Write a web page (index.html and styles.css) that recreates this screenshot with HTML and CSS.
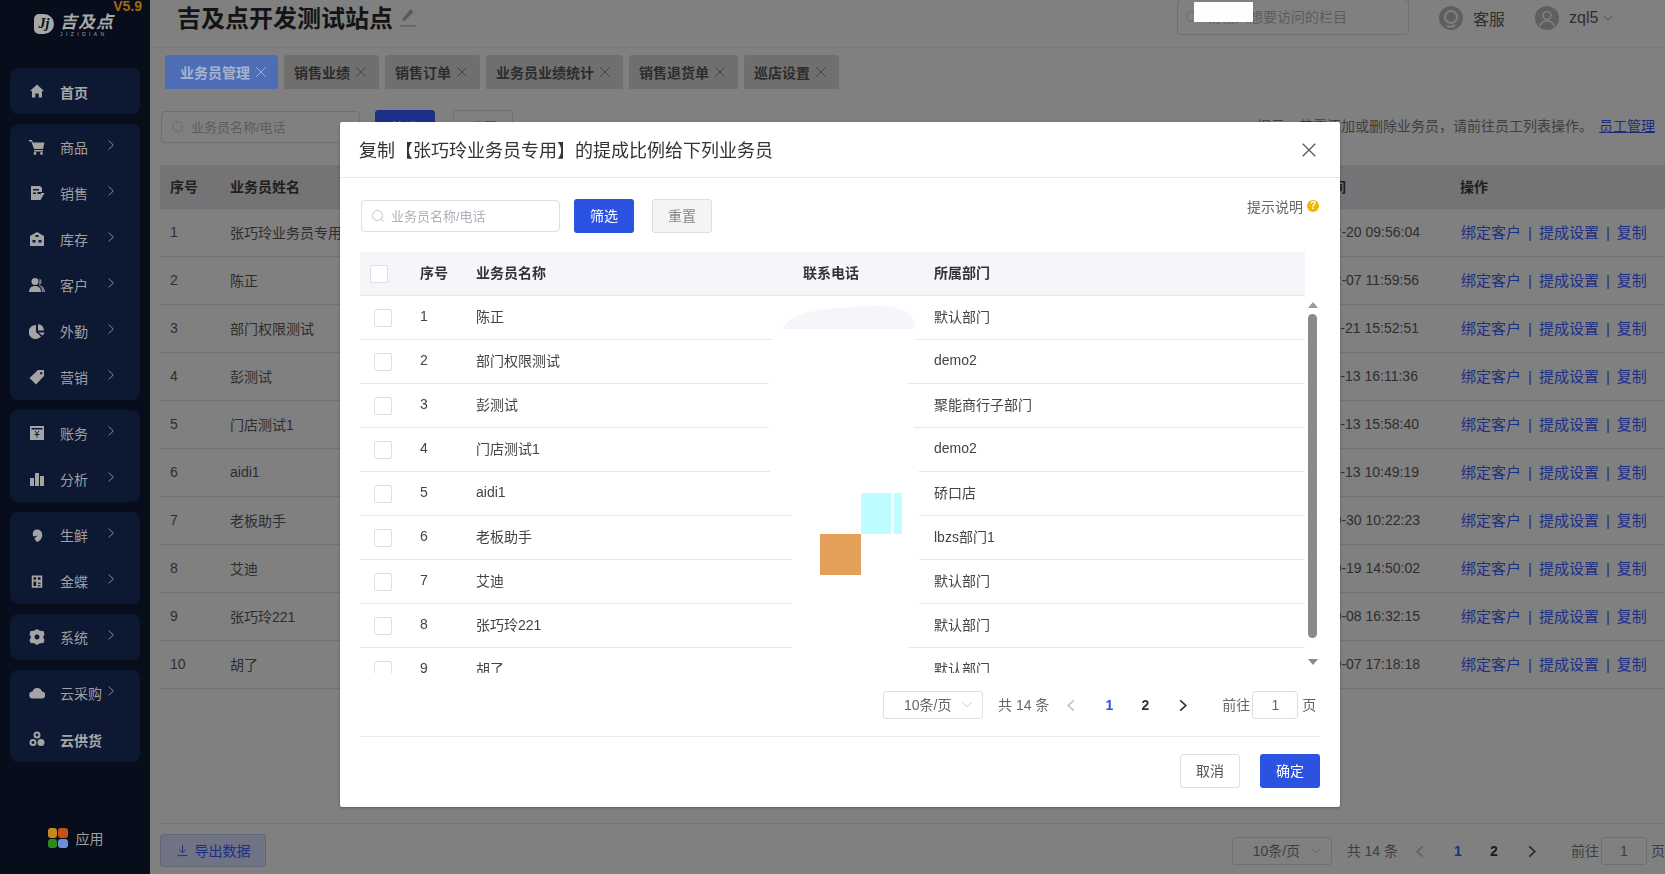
FILE: index.html
```html
<!DOCTYPE html>
<html lang="zh-CN">
<head>
    <meta charset="UTF-8">
    <title>业务员管理</title>
    <link rel="stylesheet" href="styles.css">
</head>
<body>
    <svg class="sprite" xmlns="http://www.w3.org/2000/svg">
        <symbol id="i-home" viewBox="0 0 16 16"><path d="M8 1.500 15 8h-2v6.500H9.700v-4H6.300v4H3V8H1z"/></symbol>
        <symbol id="i-cart" viewBox="0 0 16 16"><path d="M0 1h3l.8 2.500H15.500L14 10H5L2.300 2.500H0zM5 11h9v1.500H5z"/><circle cx="6" cy="14.500" r="1.400"/><circle cx="12.500" cy="14.500" r="1.400"/></symbol>
        <symbol id="i-sale" viewBox="0 0 16 16"><path d="M2 1h9l2 2v4H8.500v2H11v3.500l-2 2.500H2zM4 4v1.500h6V4zM4 7.500V9h3V7.500z" fill-rule="evenodd"/><path d="M12 8h3.500l-4 7H9z"/></symbol>
        <symbol id="i-stock" viewBox="0 0 16 16"><path d="M1 5l7-4 7 4v10H1zM6.500 4v2h3V4zM3.500 9v2.500h3V9zM9.500 9v2.500h3V9z" fill-rule="evenodd"/></symbol>
        <symbol id="i-user" viewBox="0 0 16 16"><circle cx="6" cy="4.500" r="3.500"/><path d="M0 15c0-4 2.500-6 6-6s6 2 6 6z"/><path d="M10.500 1.500a3.500 3.500 0 0 1 0 6.500c3 1 5.500 3 5.500 7h-3c0-3-1-5-3-6.500z" opacity=".7"/></symbol>
        <symbol id="i-pie" viewBox="0 0 16 16"><path d="M7 2v7l5 4.500A7 7 0 1 1 7 2z"/><path d="M9 1a7 7 0 0 1 6 6.500H9zM9.500 9.500H15.500a7 7 0 0 1-2 3z"/></symbol>
        <symbol id="i-tag" viewBox="0 0 16 16"><path d="M9 1h6v6l-8 8.500L.5 9zM12.200 3a1.200 1.200 0 1 0 .01 0z" fill-rule="evenodd"/></symbol>
        <symbol id="i-bill" viewBox="0 0 16 16"><path d="M1 1h14v14H1zM2.500 3v1.500h11V3z" fill-rule="evenodd"/><path d="M6 6l2 2.500L10 6M5.500 9.500h5M8 8.500v4" stroke="#0d1833" fill="none"/></symbol>
        <symbol id="i-bars" viewBox="0 0 16 16"><path d="M1 7h4v8H1zM6 2h4v13H6zM11 5h4v10h-4z"/></symbol>
        <symbol id="i-leaf" viewBox="0 0 16 16"><path d="M8 1c4 0 6 3 6 6 0 5-4 8-6 8-1 0-2-2-3-4l4-3-5 1C2 5 4 1 8 1z"/></symbol>
        <symbol id="i-kd" viewBox="0 0 16 16"><path d="M2 1h12v14H2zM4 3v3h3V3zM9 3v3h3V3zM4 8v5h3V8zM9 9v1.500h3V9zM9 12v1.500h3V12z" fill-rule="evenodd"/></symbol>
        <symbol id="i-gear" viewBox="0 0 16 16"><path d="M8 0l3 1.800 3.500.2 1 3.500L14 8l1.500 3-1 3-3.500.3L8 16l-3-1.700-3.500-.3-1-3L2 8 .5 5.500l1-3.500L5 1.800zM8 5.500a2.500 2.500 0 1 0 .01 0z" fill-rule="evenodd"/></symbol>
        <symbol id="i-cloud" viewBox="0 0 16 16"><path d="M4 13.500a3.500 3.500 0 0 1-.5-7A5 5 0 0 1 13 6.500a3.500 3.500 0 0 1-.5 7z"/></symbol>
        <symbol id="i-supply" viewBox="0 0 16 16"><path d="M8 .5a3.500 3.500 0 1 1 0 7 3.500 3.500 0 0 1 0-7zM4 8a3.500 3.500 0 1 1 0 7 3.500 3.500 0 0 1 0-7zM12 8a3.500 3.500 0 1 1 0 7 3.500 3.500 0 0 1 0-7zM8 2.500a1.500 1.500 0 1 0 .01 0zM4 10a1.500 1.500 0 1 0 .01 0z" fill-rule="evenodd"/></symbol>
        <symbol id="i-right" viewBox="0 0 10 14"><path d="M2 1.500 8 7l-6 5.500" fill="none" stroke="currentColor" stroke-width="1.200"/></symbol>
        <symbol id="i-left" viewBox="0 0 10 14"><path d="M8 1.500 2 7l6 5.500" fill="none" stroke="currentColor" stroke-width="1.800"/></symbol>
        <symbol id="i-next" viewBox="0 0 10 14"><path d="M2 1.500 8 7l-6 5.500" fill="none" stroke="currentColor" stroke-width="1.800"/></symbol>
        <symbol id="i-down" viewBox="0 0 14 8"><path d="M1.500 1.500 7 6.500l5.500-5" fill="none" stroke="currentColor" stroke-width="1"/></symbol>
        <symbol id="i-x" viewBox="0 0 14 14"><path d="M1.500 1.500l11 11M12.500 1.500l-11 11" fill="none" stroke="currentColor" stroke-width="1.100"/></symbol>
        <symbol id="i-search" viewBox="0 0 14 14"><circle cx="6.500" cy="6.500" r="5" fill="none" stroke="currentColor"/><path d="M10 10l2.500 2.500" stroke="currentColor"/></symbol>
    </svg>

    <div class="app">
        <aside class="sidebar">
            <div class="logo">
                <span class="logo-mark">Jj</span>
                <div class="logo-text"><b>吉及点</b><small>JIZIDIAN</small></div>
                <span class="version">V5.9</span>
            </div>

            <nav class="menu">
                <div class="menu-group">
                    <a class="menu-item strong"><svg class="menu-icon"><use href="#i-home"/></svg><span>首页</span></a>
                </div>
                <div class="menu-group">
                    <a class="menu-item"><svg class="menu-icon"><use href="#i-cart"/></svg><span>商品</span><svg class="menu-arrow"><use href="#i-right"/></svg></a>
                    <a class="menu-item"><svg class="menu-icon"><use href="#i-sale"/></svg><span>销售</span><svg class="menu-arrow"><use href="#i-right"/></svg></a>
                    <a class="menu-item"><svg class="menu-icon"><use href="#i-stock"/></svg><span>库存</span><svg class="menu-arrow"><use href="#i-right"/></svg></a>
                    <a class="menu-item"><svg class="menu-icon"><use href="#i-user"/></svg><span>客户</span><svg class="menu-arrow"><use href="#i-right"/></svg></a>
                    <a class="menu-item"><svg class="menu-icon"><use href="#i-pie"/></svg><span>外勤</span><svg class="menu-arrow"><use href="#i-right"/></svg></a>
                    <a class="menu-item"><svg class="menu-icon"><use href="#i-tag"/></svg><span>营销</span><svg class="menu-arrow"><use href="#i-right"/></svg></a>
                </div>
                <div class="menu-group">
                    <a class="menu-item"><svg class="menu-icon"><use href="#i-bill"/></svg><span>账务</span><svg class="menu-arrow"><use href="#i-right"/></svg></a>
                    <a class="menu-item"><svg class="menu-icon"><use href="#i-bars"/></svg><span>分析</span><svg class="menu-arrow"><use href="#i-right"/></svg></a>
                </div>
                <div class="menu-group">
                    <a class="menu-item"><svg class="menu-icon small"><use href="#i-leaf"/></svg><span>生鲜</span><svg class="menu-arrow"><use href="#i-right"/></svg></a>
                    <a class="menu-item"><svg class="menu-icon small"><use href="#i-kd"/></svg><span>金蝶</span><svg class="menu-arrow"><use href="#i-right"/></svg></a>
                </div>
                <div class="menu-group">
                    <a class="menu-item"><svg class="menu-icon"><use href="#i-gear"/></svg><span>系统</span><svg class="menu-arrow"><use href="#i-right"/></svg></a>
                </div>
                <div class="menu-group">
                    <a class="menu-item"><svg class="menu-icon"><use href="#i-cloud"/></svg><span>云采购</span><svg class="menu-arrow tight"><use href="#i-right"/></svg></a>
                    <a class="menu-item strong"><svg class="menu-icon"><use href="#i-supply"/></svg><span>云供货</span></a>
                </div>
            </nav>

            <div class="apps">
                <span class="apps-grid"><i class="c1"></i><i class="c2"></i><i class="c3"></i><i class="c4"></i></span>
                <span>应用</span>
            </div>
        </aside>

        <main class="main">
            <header class="top-bar">
                <h1 class="site-name">吉及点开发测试站点</h1>
                <svg class="edit-icon" viewBox="0 0 18 18"><path d="M11.500 1 14 3.500 6.500 11 3.500 12l1-3zM2 15.500h14v1.200H2z"/></svg>
                <div class="top-search">
                    <svg class="search-icon"><use href="#i-search"/></svg>
                    <span>请输入想要访问的栏目</span>
                    <span class="top-search-patch"></span>
                </div>
                <div class="top-link">
                    <svg class="avatar" viewBox="0 0 24 24"><circle cx="12" cy="12" r="12" fill="#5f5f5f"/><circle cx="12" cy="11" r="6" fill="none" stroke="#808080" stroke-width="2"/><path d="M8 20c2 1 6 1 8-1" stroke="#808080" stroke-width="2" fill="none"/></svg>
                    <span>客服</span>
                </div>
                <div class="top-link user">
                    <svg class="avatar" viewBox="0 0 24 24"><circle cx="12" cy="12" r="12" fill="#5f5f5f"/><circle cx="12" cy="9.500" r="4" fill="none" stroke="#808080" stroke-width="1.600"/><path d="M5 20c1-4 4-5 7-5s6 1 7 5" stroke="#808080" stroke-width="1.600" fill="none"/></svg>
                    <span>zql5</span>
                    <svg class="user-arrow"><use href="#i-down"/></svg>
                </div>
            </header>

            <div class="tabs">
                <a class="tab active">业务员管理<svg class="tab-close"><use href="#i-x"/></svg></a>
                <a class="tab">销售业绩<svg class="tab-close"><use href="#i-x"/></svg></a>
                <a class="tab">销售订单<svg class="tab-close"><use href="#i-x"/></svg></a>
                <a class="tab">业务员业绩统计<svg class="tab-close"><use href="#i-x"/></svg></a>
                <a class="tab">销售退货单<svg class="tab-close"><use href="#i-x"/></svg></a>
                <a class="tab">巡店设置<svg class="tab-close"><use href="#i-x"/></svg></a>
            </div>

            <div class="toolbar">
                <div class="search-box">
                    <svg class="search-icon"><use href="#i-search"/></svg>
                    <span>业务员名称/电话</span>
                </div>
                <a class="btn-dim primary">筛选</a>
                <a class="btn-dim">重置</a>
                <p class="tip">提示：若需添加或删除业务员，请前往员工列表操作。<a>员工管理</a></p>
            </div>

            <div class="table">
                <div class="table-row table-head"><span>序号</span><span>业务员姓名</span><span>创建时间</span><span>操作</span></div>
                <div class="table-row"><span>1</span><span>张巧玲业务员专用</span><span>2023-12-20 09:56:04</span><span class="ops"><a>绑定客户</a><i>|</i><a>提成设置</a><i>|</i><a>复制</a></span></div>
                <div class="table-row"><span>2</span><span>陈正</span><span>2023-12-07 11:59:56</span><span class="ops"><a>绑定客户</a><i>|</i><a>提成设置</a><i>|</i><a>复制</a></span></div>
                <div class="table-row"><span>3</span><span>部门权限测试</span><span>2023-11-21 15:52:51</span><span class="ops"><a>绑定客户</a><i>|</i><a>提成设置</a><i>|</i><a>复制</a></span></div>
                <div class="table-row"><span>4</span><span>彭测试</span><span>2023-11-13 16:11:36</span><span class="ops"><a>绑定客户</a><i>|</i><a>提成设置</a><i>|</i><a>复制</a></span></div>
                <div class="table-row"><span>5</span><span>门店测试1</span><span>2023-11-13 15:58:40</span><span class="ops"><a>绑定客户</a><i>|</i><a>提成设置</a><i>|</i><a>复制</a></span></div>
                <div class="table-row"><span>6</span><span>aidi1</span><span>2023-11-13 10:49:19</span><span class="ops"><a>绑定客户</a><i>|</i><a>提成设置</a><i>|</i><a>复制</a></span></div>
                <div class="table-row"><span>7</span><span>老板助手</span><span>2023-10-30 10:22:23</span><span class="ops"><a>绑定客户</a><i>|</i><a>提成设置</a><i>|</i><a>复制</a></span></div>
                <div class="table-row"><span>8</span><span>艾迪</span><span>2023-10-19 14:50:02</span><span class="ops"><a>绑定客户</a><i>|</i><a>提成设置</a><i>|</i><a>复制</a></span></div>
                <div class="table-row"><span>9</span><span>张巧玲221</span><span>2023-10-08 16:32:15</span><span class="ops"><a>绑定客户</a><i>|</i><a>提成设置</a><i>|</i><a>复制</a></span></div>
                <div class="table-row"><span>10</span><span>胡了</span><span>2023-09-07 17:18:18</span><span class="ops"><a>绑定客户</a><i>|</i><a>提成设置</a><i>|</i><a>复制</a></span></div>
            </div>

            <footer class="page-foot">
                <a class="export-btn">
                    <svg viewBox="0 0 14 14"><path d="M7 1v8M3.500 6 7 9.500 10.500 6M1.500 12.500h11" fill="none" stroke="currentColor"/></svg>
                    <span>导出数据</span>
                </a>
                <div class="pager dim">
                    <div class="page-select"><span>10条/页</span><svg><use href="#i-down"/></svg></div>
                    <span class="page-total">共 14 条</span>
                    <svg class="page-arrow off"><use href="#i-left"/></svg>
                    <span class="page-num current">1</span>
                    <span class="page-num">2</span>
                    <svg class="page-arrow"><use href="#i-next"/></svg>
                    <span class="page-go">前往</span>
                    <span class="page-input">1</span>
                    <span class="page-unit">页</span>
                </div>
            </footer>
        </main>
    </div>

    <section class="dialog">
        <div class="dialog-head">
            <h2>复制【张巧玲业务员专用】的提成比例给下列业务员</h2>
            <svg class="dialog-close"><use href="#i-x"/></svg>
        </div>

        <div class="dialog-body">
            <div class="dialog-tools">
                <div class="search-box light">
                    <svg class="search-icon"><use href="#i-search"/></svg>
                    <span>业务员名称/电话</span>
                </div>
                <a class="btn primary"><span>筛选</span></a>
                <a class="btn gray"><span>重置</span></a>
                <div class="hint">提示说明<span class="hint-icon">?</span></div>
            </div>

            <div class="pick-head pick-row">
                <span class="check"></span><span>序号</span><span>业务员名称</span><span>联系电话</span><span>所属部门</span>
            </div>

            <div class="pick-wrap">
                <div class="pick-list">
                    <div class="pick-row"><span class="check"></span><span>1</span><span>陈正</span><span></span><span>默认部门</span></div>
                    <div class="pick-row"><span class="check"></span><span>2</span><span>部门权限测试</span><span></span><span>demo2</span></div>
                    <div class="pick-row"><span class="check"></span><span>3</span><span>彭测试</span><span></span><span>聚能商行子部门</span></div>
                    <div class="pick-row"><span class="check"></span><span>4</span><span>门店测试1</span><span></span><span>demo2</span></div>
                    <div class="pick-row"><span class="check"></span><span>5</span><span>aidi1</span><span></span><span>硚口店</span></div>
                    <div class="pick-row"><span class="check"></span><span>6</span><span>老板助手</span><span></span><span>lbzs部门1</span></div>
                    <div class="pick-row"><span class="check"></span><span>7</span><span>艾迪</span><span></span><span>默认部门</span></div>
                    <div class="pick-row"><span class="check"></span><span>8</span><span>张巧玲221</span><span></span><span>默认部门</span></div>
                    <div class="pick-row"><span class="check"></span><span>9</span><span>胡了</span><span></span><span>默认部门</span></div>
                    <!-- phone numbers are painted out in the source shot -->
                    <svg class="redact" viewBox="0 0 160 377">
                        <path d="M12 46V36L15 33C25 14 50 11 90 10C130 8 153 10 155 28V44H137V46L148 90 154 134 159 178 159 310 148 352 140 377H32V178L10 178 8 90z" fill="#fff"/>
                        <path d="M23 33C28 17 60 12 95 11 135 8 156 12 155 33z" fill="#f5f6fa"/>
                        <path d="M101 197H131V238H101zM134 197H142V238H134z" fill="#bdfdff"/>
                        <path d="M60 238H101V279H60z" fill="#e4a05a"/>
                    </svg>
                </div>
                <div class="scroll-bar">
                    <span class="scroll-up"></span>
                    <span class="scroll-thumb"></span>
                    <span class="scroll-down"></span>
                </div>
            </div>

            <div class="pager">
                <div class="page-select"><span>10条/页</span><svg><use href="#i-down"/></svg></div>
                <span class="page-total">共 14 条</span>
                <svg class="page-arrow off"><use href="#i-left"/></svg>
                <span class="page-num current">1</span>
                <span class="page-num">2</span>
                <svg class="page-arrow"><use href="#i-next"/></svg>
                <span class="page-go">前往</span>
                <span class="page-input">1</span>
                <span class="page-unit">页</span>
            </div>

            <div class="dialog-foot">
                <a class="btn plain"><span>取消</span></a>
                <a class="btn primary"><span>确定</span></a>
            </div>
        </div>
    </section>
</body>
</html>
```

FILE: styles.css
```css
* { margin: 0; padding: 0; box-sizing: border-box; }
body { width: 1665px; height: 874px; overflow: hidden; font-family: "Liberation Sans", "Noto Sans CJK SC", sans-serif; font-size: 14px; color: #2e2e2e; background: #808080; }
a { text-decoration: none; }
.sprite { display: none; }
.app { display: flex; height: 874px; }

/* sidebar */
.sidebar { width: 150px; flex-shrink: 0; background: #070d1a; display: flex; flex-direction: column; color: #a0a0a0; }
.logo { height: 68px; display: flex; align-items: flex-start; padding: 14px 0 0 34px; position: relative; }
.logo-mark { width: 20px; height: 20px; border-radius: 5px 10px 10px 5px; background: #a8a8a8; color: #070d1a; font: italic bold 14px/20px "Liberation Serif", serif; text-align: center; }
.logo-text { margin-left: 6px; display: flex; flex-direction: column; color: #a8a8a8; }
.logo-text b { font-size: 17px; line-height: 17px; font-style: italic; letter-spacing: 1px; }
.logo-text small { font-size: 5px; line-height: 6px; letter-spacing: 3.400px; }
.version { position: absolute; top: -2px; right: 8px; color: #a5690f; font-size: 14px; font-weight: bold; }

.menu { display: flex; flex-direction: column; gap: 10px; padding: 0 10px; }
.menu-group { background: #0d1833; border-radius: 8px; }
.menu-item { height: 46px; display: flex; align-items: center; padding-left: 19px; color: #a0a0a0; }
.menu-item span { margin-left: 15px; }
.menu-item.strong { font-weight: bold; color: #a8a8a8; }
.menu-item.strong span { padding-top: 2px; }
.menu-icon { width: 16px; height: 16px; fill: #a4a4a4; flex-shrink: 0; }
.menu-icon.small { width: 14px; height: 15px; margin: 0 1px; }
.menu-arrow { width: 8px; height: 12px; margin-left: 19px; margin-top: -4px; color: #8c8c8c; }
.menu-arrow.tight { margin-left: 5px; }

.apps { margin-top: auto; margin-bottom: 26px; display: flex; align-items: center; justify-content: center; gap: 8px; padding-left: 1px; color: #a0a0a0; }
.apps-grid { width: 20px; height: 20px; display: grid; grid-template-columns: 1fr 1fr; gap: 1px; }
.apps-grid i { border-radius: 3px; }
.apps-grid .c1 { background: #c58a1f; }
.apps-grid .c2 { background: #c4501a; }
.apps-grid .c3 { background: #2f8a1e; }
.apps-grid .c4 { background: #6b8fd6; }

/* main column, dimmed behind the dialog */
.main { flex: 1; min-width: 0; display: flex; flex-direction: column; }
.top-bar { height: 48px; flex-shrink: 0; display: flex; align-items: flex-start; padding-left: 27px; border-bottom: 1px solid #797979; }
.site-name { font-size: 24px; line-height: 38px; font-weight: bold; color: #141414; white-space: nowrap; letter-spacing: 0; }
.edit-icon { width: 20px; height: 20px; margin: 8px 0 0 5px; fill: #5a5a5a; }
.top-search { width: 232px; height: 36px; margin-left: 759px; margin-top: -1px; border: 1px solid #6f6f6f; border-radius: 4px; display: flex; align-items: center; padding-left: 7px; color: #5d5d5d; position: relative; }
.top-search span:first-of-type { margin-left: 8px; padding-bottom: 2px; white-space: nowrap; }
.top-search-patch { position: absolute; left: 16px; top: 2px; width: 59px; height: 20px; background: #fdfdfd; }
.search-icon { width: 14px; height: 14px; color: #6a6a6a; flex-shrink: 0; }
.top-link { display: flex; align-items: center; height: 36px; margin-left: 30px; font-size: 16px; color: #2e2e2e; white-space: nowrap; }
.top-link.user { margin-left: 30px; }
.avatar { width: 24px; height: 24px; margin-right: 10px; }
.user-arrow { width: 10px; height: 6px; margin-left: 5px; color: #3a3a3a; }

.tabs { height: 52px; flex-shrink: 0; display: flex; gap: 6px; padding: 7px 0 0 15px; }
.tab { height: 34px; display: flex; align-items: center; padding: 0 12px 1px 10px; background: #6f6f6f; border-radius: 3px 3px 0 0; color: #2c2c2c; font-weight: bold; white-space: nowrap; }
.tab.active { background: #4d6eb4; color: #a5b3d2; padding: 0 11px 1px 15px; }
.tab-close { width: 12px; height: 12px; margin-left: 5px; color: #444; }
.tab.active .tab-close { color: #a5b3d2; }

.toolbar { height: 65px; flex-shrink: 0; display: flex; align-items: flex-start; padding: 10px 10px 0 11px; }
.search-box { width: 199px; height: 32px; display: flex; align-items: center; gap: 6px; padding-left: 9px; border: 1px solid #6f6f6f; border-radius: 4px; color: #5d5d5d; font-size: 13px; margin-top: 1px; }
.search-box span { padding-bottom: 2px; }
.btn-dim { width: 60px; height: 34px; margin-left: 15px; display: flex; align-items: center; justify-content: center; border: 1px solid #6f6f6f; border-radius: 3px; color: #4a4a4a; }
.btn-dim.primary { background: #1c3087; color: #8f9bc4; border-color: #1c3087; }
.btn-dim + .btn-dim { margin-left: 18px; }
.tip { margin-left: auto; margin-top: 5px; color: #3e3e3e; white-space: nowrap; }
.tip a { margin-left: 6px; color: #1a2d7d; text-decoration: underline; }

.table { flex: 1; padding-left: 10px; }
.table-row { height: 48px; display: grid; grid-template-columns: 60px 1060px 170px 1fr; align-items: center; border-bottom: 1px solid #727272; padding: 0 0 2px 10px; white-space: nowrap; }
.table-head { height: 44px; background: #747476; font-weight: bold; color: #1f1f1f; }
.ops { padding-left: 1px; font-size: 15px; }
.ops a { color: #1c2f82; }
.ops i { font-style: normal; color: #1c2f82; margin: 0 7px; }

.page-foot { height: 51px; flex-shrink: 0; margin-left: 10px; border-top: 1px solid #757575; display: flex; align-items: flex-start; justify-content: space-between; padding-top: 10px; }
.export-btn { width: 106px; height: 33px; display: flex; align-items: center; justify-content: center; gap: 6px; background: #6f7384; border: 1px solid #61667c; border-radius: 3px; color: #1c2f82; }
.export-btn span { padding-bottom: 2px; }
.export-btn svg { width: 13px; height: 13px; }

/* pagination, used twice */
.pager { display: flex; align-items: center; height: 28px; white-space: nowrap; color: #666; }
.page-select { width: 100px; height: 28px; display: flex; align-items: center; justify-content: space-between; padding: 0 9px 2px 20px; border: 1px solid #dcdfe6; border-radius: 3px; }
.page-select svg { width: 12px; height: 7px; color: #c0c4cc; }
.page-total { margin-left: 15px; padding-bottom: 2px; }
.page-arrow { width: 10px; height: 13px; margin-left: 17px; color: #333; }
.page-arrow.off { color: #c0c4cc; }
.page-num { width: 36px; text-align: center; font-weight: bold; color: #333; padding-bottom: 1px; }
.page-num.current { color: #2b52e0; margin-left: 15px; }
.page-num + .page-arrow { margin-left: 15px; }
.page-go { margin-left: 34px; padding-bottom: 2px; }
.page-input { width: 46px; height: 28px; margin-left: 2px; line-height: 26px; text-align: center; border: 1px solid #dcdfe6; border-radius: 3px; }
.page-unit { margin-left: 4px; padding-bottom: 2px; }
.pager.dim { color: #3e3e3e; margin-top: 3px; }
.pager.dim .page-select, .pager.dim .page-input { border-color: #6f6f6f; }
.pager.dim .page-select svg { color: #626262; }
.pager.dim .page-arrow { color: #2a2a2a; }
.pager.dim .page-arrow.off { color: #626262; }
.pager.dim .page-num { color: #1a1a1a; }
.pager.dim .page-num.current { color: #1c2f82; }

/* dialog */
.dialog { position: fixed; left: 340px; top: 122px; width: 1000px; height: 685px; background: #fff; border-radius: 2px; box-shadow: 0 1px 3px rgba(0,0,0,0.3); }
.dialog-head { height: 56px; display: flex; align-items: center; justify-content: space-between; padding: 0 22px 0 19px; border-bottom: 1px solid #e4e7ed; }
.dialog-head h2 { font-size: 18px; line-height: 24px; padding-top: 3px; font-weight: normal; color: #333; }
.dialog-close { width: 16px; height: 16px; color: #555; margin-right: 1px; }
.dialog-body { padding: 21px 20px 0 20px; }
.dialog-tools { height: 53px; display: flex; align-items: flex-start; }
.search-box.light { margin-left: 1px; border-color: #dcdfe6; color: #aeb1b8; }
.search-box.light .search-icon { color: #c0c4cc; }
.btn { width: 60px; height: 34px; display: flex; align-items: center; justify-content: center; border-radius: 3px; cursor: pointer; }
.btn span { padding-bottom: 2px; }
.btn.primary { background: #2b52e0; color: #fff; margin-left: 14px; }
.btn.gray { background: #f4f4f5; border: 1px solid #dcdfe6; color: #888; margin-left: 18px; }
.btn.plain { background: #fff; border: 1px solid #dcdfe6; color: #555; }
.hint { margin-left: auto; margin-top: -3px; display: flex; align-items: center; gap: 4px; color: #666; padding-right: 1px; height: 20px; }
.hint-icon { width: 12px; height: 12px; border-radius: 50%; background: #f5b400; color: #fff; font-size: 10px; line-height: 12px; text-align: center; font-weight: bold; }

.pick-row { width: 945px; height: 44px; display: grid; grid-template-columns: 60px 56px 327px 131px 1fr; align-items: center; border-bottom: 1px solid #e4e7ed; color: #444; white-space: nowrap; }
.pick-row span:not(.check) { padding-bottom: 3px; }
.pick-head { height: 44px; background: #f5f6fa; font-weight: bold; color: #333; }
.check { width: 18px; height: 18px; margin-left: 14px; background: #fff; border: 1px solid #dcdfe6; border-radius: 2px; }
.pick-head .check { margin-left: 10px; }
.pick-wrap { display: flex; height: 377px; }
.pick-list { width: 945px; height: 377px; overflow: hidden; position: relative; }
.redact { position: absolute; left: 400px; top: 0; width: 160px; height: 377px; }
.scroll-bar { width: 9px; margin-left: 3px; display: flex; flex-direction: column; align-items: center; }
.scroll-up { margin-top: 6px; border: 5px solid transparent; border-top: 0; border-bottom: 6px solid #9a9a9a; }
.scroll-thumb { width: 9px; height: 324px; margin-top: 6px; background: #8a8a8a; border-radius: 5px; }
.scroll-down { margin-top: 21px; border: 5px solid transparent; border-bottom: 0; border-top: 6px solid #8a8a8a; }

.dialog-body > .pager { margin-top: 18px; padding-left: 523px; }
.dialog-foot { margin-top: 17px; padding-top: 17px; border-top: 1px solid #e9ebf0; display: flex; justify-content: flex-end; gap: 20px; }
.dialog-foot .btn.primary { margin-left: 0; }
```
